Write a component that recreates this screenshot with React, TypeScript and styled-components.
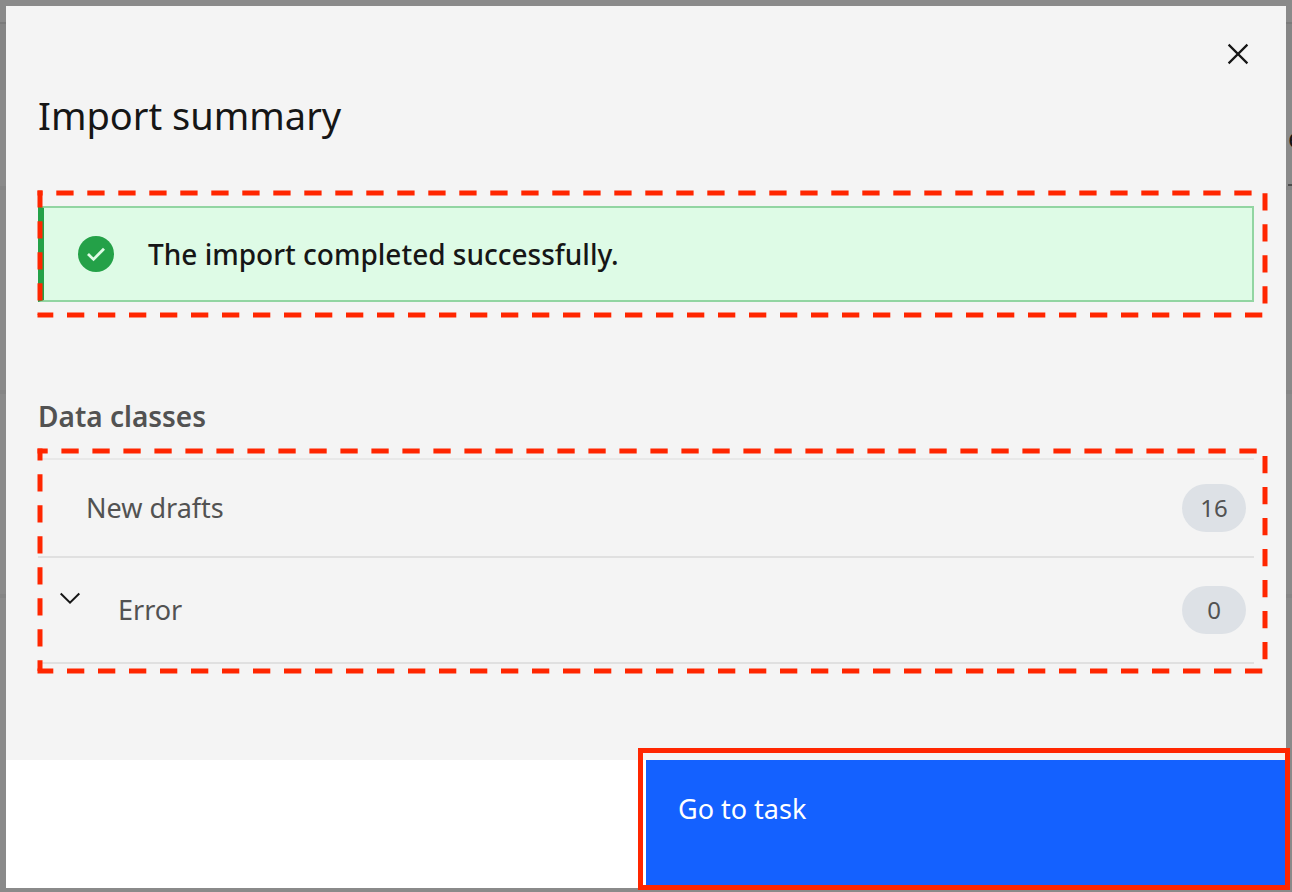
import React from "react";
import styled, { createGlobalStyle } from "styled-components";

const GlobalStyle = createGlobalStyle`
  * { box-sizing: border-box; }
  body {
    margin: 0;
    background: #8a8a8a;
    color: #161616;
    font-family: "Noto Sans", "Open Sans", sans-serif;
    font-size: 27px;
    line-height: 36px;
  }
  h1, h2, p, ul { margin: 0; padding: 0; }
  button { border: 0; margin: 0; font: inherit; cursor: pointer; }
`;

const Screen = styled.div`
  display: grid;
  grid-template-columns: minmax(0, 1fr);
  min-height: 100vh;
  overflow: hidden;
`;

const Backdrop = styled.div`
  grid-area: 1 / 1;
  display: flex;
  flex-direction: column;
  overflow: hidden;
  padding-top: 22px;
`;

const BackdropHeader = styled.div`
  height: 68px;
  flex: none;
  border-top: 2px solid #7b7b7b;
  background: #858585;
`;

const BackdropToolbar = styled.div`
  display: flex;
  justify-content: flex-end;
  align-items: center;
  flex: none;
  height: 96px;
  overflow: hidden;
`;

const BackdropLabel = styled.span`
  width: 4px;
  height: 96px;
  border-bottom: 2px solid #4d4d4d;
  line-height: 96px;
  overflow: hidden;
`;

const BackdropRow = styled.div`
  flex: none;
  height: 204px;
  border-top: 4px solid #858585;
`;

const Dialog = styled.div`
  grid-area: 1 / 1;
  position: relative;
  display: flex;
  flex-direction: column;
  margin: 6px 6px 4px;
  background: #f4f4f4;
`;

const Header = styled.header`
  display: flex;
  justify-content: space-between;
  align-items: flex-start;
  padding-left: 32px;
`;

const Title = styled.h1`
  padding-top: 84px;
  font-size: 38px;
  line-height: 50px;
  font-weight: 400;
`;

const CloseButton = styled.button`
  display: grid;
  place-items: center;
  width: 96px;
  height: 96px;
  padding: 0;
  background: transparent;
`;

const Content = styled.div`
  flex: 1;
  padding: 66px 32px 96px;
`;

const Highlighted = styled.div`
  position: relative;
`;

const Notification = styled.div`
  display: flex;
  align-items: center;
  gap: 34px;
  height: 96px;
  padding-left: 34px;
  border: 2px solid #92d5a2;
  border-left: 6px solid #24a148;
  background: #defbe6;
`;

const NotificationText = styled.p`
  font-size: 28px;
  line-height: 36px;
  font-weight: 550;
`;

const SectionTitle = styled.h2`
  margin: 96px 0 24px;
  color: #525252;
  font-size: 28px;
  line-height: 36px;
  font-weight: 600;
`;

const List = styled.ul`
  list-style: none;
  border-top: 2px solid #e8e8e8;
`;

const Item = styled.li`
  display: flex;
  border-bottom: 2px solid #e0e0e0;
`;

const PlainRow = styled.div`
  display: flex;
  align-items: center;
  flex: 1;
  height: 96px;
  padding: 0 8px 0 48px;
  color: #525252;
`;

const ToggleRow = styled.button`
  display: flex;
  align-items: center;
  flex: 1;
  height: 104px;
  padding: 0 8px 0 16px;
  background: transparent;
  color: #525252;
  text-align: left;
`;

const ChevronSlot = styled.span`
  display: grid;
  place-items: center;
  align-self: flex-start;
  width: 32px;
  height: 80px;
  margin-right: 32px;
`;

const RowLabel = styled.span`
  flex: 1;
`;

const Count = styled.span`
  display: grid;
  place-items: center;
  width: 64px;
  height: 48px;
  border-radius: 24px;
  background: #dde1e6;
  font-size: 24px;
`;

const Footer = styled.footer`
  display: grid;
  grid-template-columns: 1fr 1fr;
  height: 128px;
  background: #fff;
`;

const PrimaryAction = styled.div`
  position: relative;
  grid-column: 2;
  display: flex;
`;

const PrimaryButton = styled.button`
  flex: 1;
  display: flex;
  padding: 31px 32px;
  background: #1461ff;
  color: #fff;
  text-align: left;
`;

const ActionFrame = styled.div`
  position: absolute;
  inset: -12px -4px -2px -8px;
  border: 5px solid #ff2600;
  pointer-events: none;
`;

const DashSvg = styled.svg<{ $top: number; $bottom: number }>`
  position: absolute;
  left: 2px;
  top: ${(p) => p.$top}px;
  width: calc(100% + 9px);
  height: calc(100% + ${(p) => p.$bottom - p.$top}px);
  overflow: visible;
  pointer-events: none;
`;

type FrameProps = {
  top: number;
  bottom: number;
  /** Position of the first full dash on each side, measured from its corner. */
  phase: { top: number; right: number; bottom: number; left: number };
};

const PERIOD = 31;

function DashedFrame({ top, bottom, phase }: FrameProps) {
  const line = { stroke: "#ff2600", strokeWidth: 5, strokeDasharray: "17.3 13.7" };
  const off = (start: number) => PERIOD - start - 2.5;
  return (
    <DashSvg $top={top} $bottom={bottom} aria-hidden="true">
      <line x1="-2.5" y1="0" x2="100%" y2="0" {...line} strokeDashoffset={off(phase.top)} />
      <line x1="100%" y1="-2.5" x2="100%" y2="100%" {...line} strokeDashoffset={off(phase.right)} />
      <line x1="-2.5" y1="100%" x2="100%" y2="100%" {...line} strokeDashoffset={off(phase.bottom)} />
      <line x1="0" y1="-2.5" x2="0" y2="100%" {...line} strokeDashoffset={off(phase.left)} />
    </DashSvg>
  );
}

export default function App() {
  return (
    <>
      <GlobalStyle />
      <Screen>
        <Backdrop aria-hidden="true">
          <BackdropHeader />
          <BackdropToolbar>
            <BackdropLabel>e</BackdropLabel>
          </BackdropToolbar>
          <BackdropRow />
          <BackdropRow />
          <BackdropRow />
        </Backdrop>
        <Dialog role="dialog" aria-modal="true" aria-labelledby="dialog-title">
          <Header>
            <Title id="dialog-title">Import summary</Title>
            <CloseButton aria-label="Close">
              <svg width="24" height="24" viewBox="0 0 24 24" fill="none" stroke="#161616" strokeWidth="2.2">
                <path d="M2.6 2.6 21.4 21.4M21.4 2.6 2.6 21.4" />
              </svg>
            </CloseButton>
          </Header>
          <Content>
            <Highlighted>
              <Notification role="status">
                <svg width="36" height="36" viewBox="0 0 36 36" fill="none">
                  <circle cx="18" cy="18" r="18" fill="#24a148" />
                  <path d="M10 18.1 15.5 23.4 26 12.7" stroke="#defbe6" strokeWidth="2.8" />
                </svg>
                <NotificationText>The import completed successfully.</NotificationText>
              </Notification>
              <DashedFrame
                top={-13}
                bottom={13}
                phase={{ top: 16.3, right: 0.3, bottom: 27, left: 28.2 }}
              />
            </Highlighted>
            <SectionTitle>Data classes</SectionTitle>
            <Highlighted>
              <List>
                <Item>
                  <PlainRow>
                    <RowLabel>New drafts</RowLabel>
                    <Count>16</Count>
                  </PlainRow>
                </Item>
                <Item>
                  <ToggleRow aria-expanded="false">
                    <ChevronSlot>
                      <svg width="24" height="16" viewBox="0 0 24 16" fill="none" stroke="#161616" strokeWidth="2">
                        <path d="M2.7 3.5 12 12.7 21.3 3.5" />
                      </svg>
                    </ChevronSlot>
                    <RowLabel>Error</RowLabel>
                    <Count>0</Count>
                  </ToggleRow>
                </Item>
              </List>
              <DashedFrame
                top={-7}
                bottom={7}
                phase={{ top: 21.4, right: 5, bottom: 27, left: 23.2 }}
              />
            </Highlighted>
          </Content>
          <Footer>
            <PrimaryAction>
              <PrimaryButton>Go to task</PrimaryButton>
              <ActionFrame />
            </PrimaryAction>
          </Footer>
        </Dialog>
      </Screen>
    </>
  );
}
